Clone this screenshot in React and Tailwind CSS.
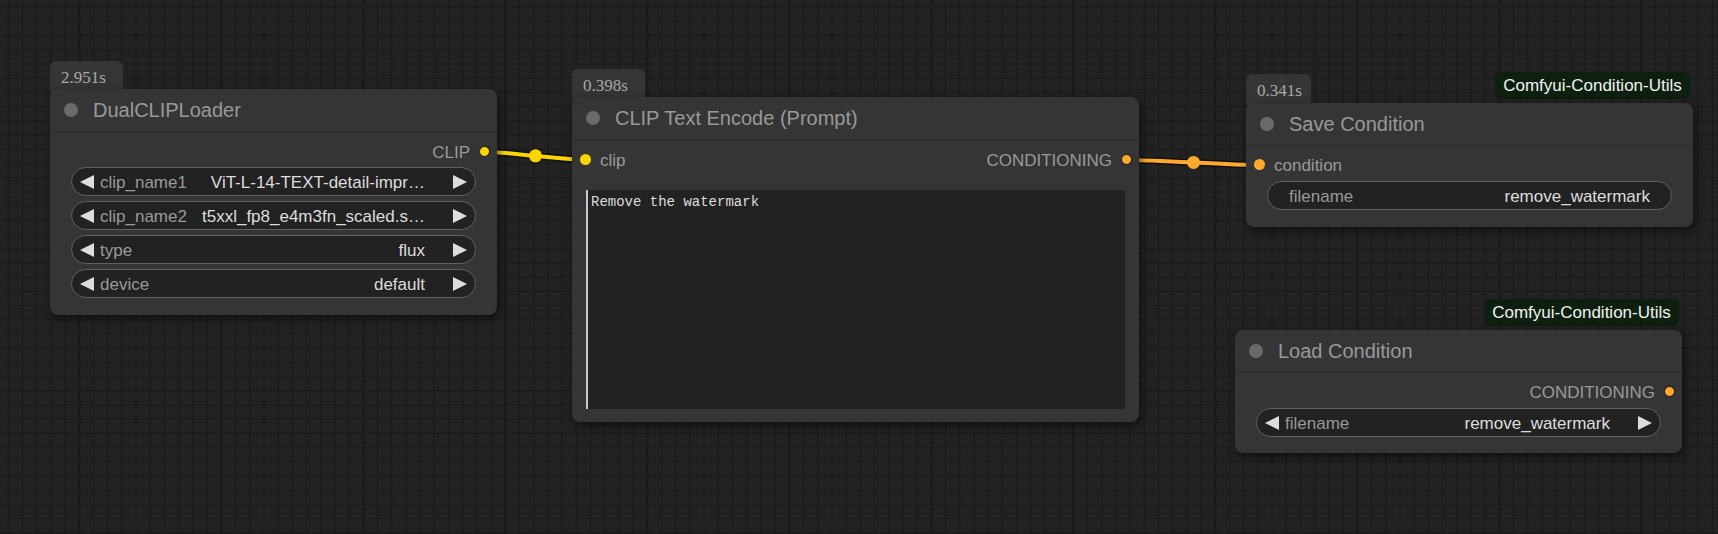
import { Fragment } from 'react';

const MINOR = 14.2;

function Canvas() {
  const vLines = [];
  for (let k = 0; k < 122; k++) vLines.push({ x: 8.3 + MINOR * k, major: k % 10 === 5 });
  const hLines = [];
  for (let k = 0; k < 39; k++) hLines.push({ y: 7.3 + MINOR * k });

  return (
    <svg className="absolute inset-0" width="1718" height="534">
      {hLines.map((l, i) => (
        <line key={'h' + i} x1="0" x2="1718" y1={l.y} y2={l.y} stroke="#1b1b1b" strokeWidth="1" />
      ))}
      {vLines.map((l, i) => (
        <line key={'v' + i} x1={l.x} x2={l.x} y1="0" y2="534" stroke="#1b1b1b" strokeWidth={l.major ? 2.5 : 1} />
      ))}

      {/* CLIP link */}
      <path d="M484 151.7 C509.6 151.7 560.7 160 586.3 160" fill="none" stroke="rgba(0,0,0,0.55)" strokeWidth="7" />
      <path d="M484 151.7 C509.6 151.7 560.7 160 586.3 160" fill="none" stroke="#FFD500" strokeWidth="4" />
      <circle cx="535.5" cy="155.8" r="6.5" fill="#FFD500" />

      {/* CONDITIONING link */}
      <path d="M1127.3 160 C1160.5 160 1226.8 165 1260 165" fill="none" stroke="rgba(0,0,0,0.55)" strokeWidth="7" />
      <path d="M1127.3 160 C1160.5 160 1226.8 165 1260 165" fill="none" stroke="#FFA931" strokeWidth="4" />
      <circle cx="1193.5" cy="162.4" r="6.5" fill="#FFA931" />
    </svg>
  );
}

function Arrow({ dir }) {
  return (
    <svg width="14" height="14" viewBox="0 0 14 14" className="shrink-0">
      <polygon points={dir === 'left' ? '14,0 14,14 0,7' : '0,0 0,14 14,7'} fill="#dddddd" />
    </svg>
  );
}

function Combo({ label, value }) {
  return (
    <div className="flex h-[29px] items-center rounded-full border border-[#616161] bg-[#222222] px-[8px] text-[17px]">
      <Arrow dir="left" />
      <span className="ml-[6px] translate-y-[1px] whitespace-nowrap text-[#999999]">{label}</span>
      <span className="ml-auto mr-[28px] translate-y-[1px] whitespace-nowrap text-[#dddddd]">{value}</span>
      <Arrow dir="right" />
    </div>
  );
}

function TextWidget({ label, value }) {
  return (
    <div className="flex h-[29px] items-center rounded-full border border-[#616161] bg-[#222222] pl-[21px] pr-[21px] text-[17px]">
      <span className="translate-y-[1px] whitespace-nowrap text-[#999999]">{label}</span>
      <span className="ml-auto translate-y-[1px] whitespace-nowrap text-[#dddddd]">{value}</span>
    </div>
  );
}

function Title({ children }) {
  return (
    <div className="flex h-[43px] items-center gap-[15px] border-b border-[#2b2b2b] pl-[14px]">
      <span className="h-[14px] w-[14px] rounded-full bg-[#6a6a6a]" />
      <span className="whitespace-nowrap text-[20px] text-[#999999]">{children}</span>
    </div>
  );
}

function InputSlot({ label, color }) {
  return (
    <div className="flex h-[28px] items-center gap-[9px] pl-[8px]">
      <span className={`h-[11px] w-[11px] rounded-full ${color}`} />
      <span className="translate-y-[2px] text-[17px] text-[#999999]">{label}</span>
    </div>
  );
}

function OutputSlot({ label, color }) {
  return (
    <div className="flex h-[28px] items-center justify-end gap-[9px] pr-[7px]">
      <span className="translate-y-[2px] text-[17px] text-[#999999]">{label}</span>
      <span className={`h-[11px] w-[11px] rounded-full border border-[#111111] ${color}`} />
    </div>
  );
}

const nodeBase = 'absolute rounded-[8px] bg-[#353535] shadow-[2px_3px_8px_rgba(0,0,0,0.55)]';
const timeBase = "absolute h-[34px] rounded-[6px] bg-[#353535] pl-[11px] pt-[4px] font-['Liberation_Serif',serif] text-[17px] text-[#a8a8a8]";
const tagBase = 'absolute flex h-[27px] w-[195px] items-center justify-center rounded-[6px] bg-[#0d200f] text-[17px] text-[#f2f2f2]';

export default function App() {
  return (
    <div className="relative h-[534px] w-[1718px] overflow-hidden bg-[#222222] font-['Liberation_Sans',Arial,sans-serif]">
      <Canvas />

      {/* DualCLIPLoader */}
      <div className={`${timeBase} left-[50px] top-[61px] w-[73px]`}>2.951s</div>
      <div className={`${nodeBase} left-[50px] top-[89px] w-[447px]`}>
        <Title>DualCLIPLoader</Title>
        <div className="pt-[5px]">
          <OutputSlot label="CLIP" color="bg-[#FFD500]" />
        </div>
        <div className="flex flex-col gap-[5px] px-[21px] pb-[17px] pt-[2px]">
          <Combo label="clip_name1" value="ViT-L-14-TEXT-detail-impr…" />
          <Combo label="clip_name2" value="t5xxl_fp8_e4m3fn_scaled.s…" />
          <Combo label="type" value="flux" />
          <Combo label="device" value="default" />
        </div>
      </div>

      {/* CLIP Text Encode */}
      <div className={`${timeBase} left-[572px] top-[69px] w-[73px]`}>0.398s</div>
      <div className={`${nodeBase} left-[572px] top-[97px] w-[567px]`}>
        <Title>CLIP Text Encode (Prompt)</Title>
        <div className="flex items-center justify-between pt-[5px]">
          <InputSlot label="clip" color="bg-[#FFD500]" />
          <OutputSlot label="CONDITIONING" color="bg-[#FFA931]" />
        </div>
        <div className="px-[14px] pb-[13px] pt-[17px]">
          <div className="h-[219px] border-l-2 border-[#c8c8c8] bg-[#222222] pl-[3px] pt-[4px] font-['Liberation_Mono',monospace] text-[14px] leading-[16px] text-[#dddddd]">
            Remove the watermark
          </div>
        </div>
      </div>

      {/* Save Condition */}
      <div className={`${tagBase} left-[1495px] top-[72px]`}>Comfyui-Condition-Utils</div>
      <div className={`${timeBase} left-[1246px] top-[74px] w-[65px]`}>0.341s</div>
      <div className={`${nodeBase} left-[1246px] top-[103px] w-[447px]`}>
        <Title>Save Condition</Title>
        <div className="pt-[4px]">
          <InputSlot label="condition" color="bg-[#FFA931]" />
        </div>
        <div className="px-[21px] pb-[17px] pt-[3px]">
          <TextWidget label="filename" value="remove_watermark" />
        </div>
      </div>

      {/* Load Condition */}
      <div className={`${tagBase} left-[1484px] top-[299px]`}>Comfyui-Condition-Utils</div>
      <div className={`${nodeBase} left-[1235px] top-[330px] w-[447px]`}>
        <Title>Load Condition</Title>
        <div className="pt-[4px]">
          <OutputSlot label="CONDITIONING" color="bg-[#FFA931]" />
        </div>
        <div className="px-[21px] pb-[16px] pt-[3px]">
          <Combo label="filename" value="remove_watermark" />
        </div>
      </div>
    </div>
  );
}
